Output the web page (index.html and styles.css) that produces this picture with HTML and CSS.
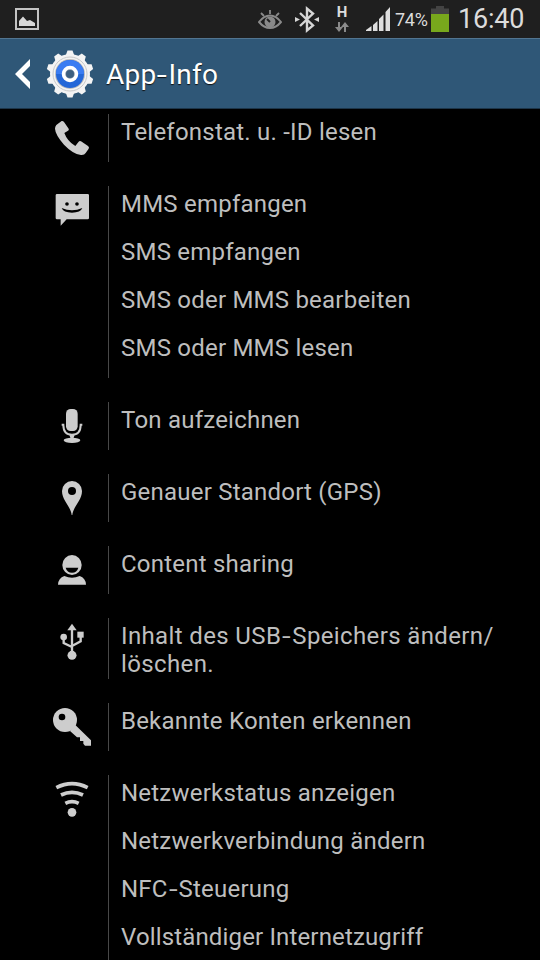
FILE: index.html
```
<!DOCTYPE html>
<html lang="de">
    <head>
        <meta charset="UTF-8">
        <meta name="viewport" content="width=device-width, initial-scale=1.0">

        <title>App-Info</title>
        <link rel="stylesheet" href="styles.css">
    </head>
    <body>
        <div class="status-bar">
            <svg class="picture" width="24" height="22" viewBox="0 0 24 22">
                <rect x="1" y="1" width="22" height="20" fill="none" stroke="#c4c4c4" stroke-width="2"/>
                <path d="M4 18V13L8 8.500L12 13L15 12L20 15V18Z" fill="#d8d8d8"/>
            </svg>
            <svg class="eye" width="24" height="38" viewBox="0 0 24 38">
                <path d="M1 22Q6 15.500 12 15.500T23 22Q18 28 12 28T1 22Z" fill="none" stroke="#8a8a8a" stroke-width="2"/>
                <circle cx="12" cy="22" r="5.500" fill="#8a8a8a"/>
                <path d="M12 22L9 19" stroke="#222" stroke-width="2"/>
                <path d="M12 10V14M3 13L6 16M21 13L18 16" stroke="#8a8a8a" stroke-width="1.800"/>
            </svg>
            <svg class="bluetooth" width="24" height="38" viewBox="0 0 24 38">
                <path d="M5 13L18 25.500L12 30.500V8.500L18 13.500L5 26" fill="none" stroke="#d6d6d6" stroke-width="2.400"/>
                <path d="M0 17L5 19.500L0 22ZM24 17L19 19.500L24 22Z" fill="#d6d6d6"/>
            </svg>
            <div class="network">
                <span>H</span>
                <svg width="14" height="10" viewBox="0 0 14 10">
                    <path d="M4 0V6M10 10V4" stroke="#8a8a8a" stroke-width="2"/>
                    <path d="M0 5H8L4 10ZM6 5H14L10 0Z" fill="#8a8a8a"/>
                </svg>
            </div>
            <svg class="signal" width="24" height="38" viewBox="0 0 24 38">
                <path d="M0 31V30L5.500 26V31ZM7 31V25L11.500 21V31ZM13 31V19L17.500 14.500V31ZM19.500 31V12L24 7V31Z" fill="#dedede"/>
            </svg>
            <span class="percent">74%</span>
            <div class="battery"></div>
            <span class="clock">16:40</span>
        </div>

        <header>
            <svg class="back" width="15" height="30" viewBox="0 0 15 30">
                <path d="M15 0V7L7 15L15 23V30L0 15Z" fill="#fff"/>
            </svg>
            <svg class="gear" width="48" height="48" viewBox="-24 -24 48 48">
                <g fill="#f4f4f4">
                    <circle r="20"/>
                    <path id="teeth" d="M-4.500 -18L-2.500 -23.500H2.500L4.500 -18ZM-4.500 18L-2.500 23.500H2.500L4.500 18Z"/>
                    <use href="#teeth" transform="rotate(36)"/>
                    <use href="#teeth" transform="rotate(72)"/>
                    <use href="#teeth" transform="rotate(108)"/>
                    <use href="#teeth" transform="rotate(144)"/>
                </g>
                <circle r="17" fill="none" stroke="#c9c9c9"/>
                <circle r="15" fill="#bdbdbd"/>
                <circle r="14" fill="#2467d8"/>
                <path d="M-14 0A14 14 0 0 1 14 0Z" fill="#3b7df2"/>
                <circle r="6.500" fill="#8a9aad" stroke="#fff" stroke-width="3.500"/>
                <circle r="4" fill="#3d5f80"/>
            </svg>
            <h1>App<span class="hyphen">-</span>Info</h1>
        </header>

        <main>
            <section>
                <svg class="icon" viewBox="0 0 120 144">
                    <path d="M29 21Q33 20 36 24L50 44Q52 48 48 50L37 57Q46 82 70 96L80 83Q83 80 87 82L108 96Q113 100 110 104L101 117Q97 124 87 123Q64 121 36 92Q10 62 9 44Q9 38 13 33Z"/>
                </svg>
                <ul>
                    <li>Telefonstat. u. -ID lesen</li>
                </ul>
            </section>
            <section>
                <svg class="icon" viewBox="0 0 120 144">
                    <path d="M15 24H107Q111 24 111 28V96Q111 100 107 100H44L26 119V100H15Q11 100 11 96V28Q11 24 15 24Z"/>
                    <g class="hole">
                        <circle cx="45" cy="54" r="5.500"/>
                        <circle cx="75" cy="54" r="5.500"/>
                        <path d="M29 66Q60 80 91 66Q86 80 60 80T29 66Z"/>
                    </g>
                </svg>
                <ul>
                    <li>MMS empfangen</li>
                    <li>SMS empfangen</li>
                    <li>SMS oder MMS bearbeiten</li>
                    <li>SMS oder MMS lesen</li>
                </ul>
            </section>
            <section>
                <svg class="icon" viewBox="0 0 120 144">
                    <rect x="42" y="21" width="35" height="66" rx="14"/>
                    <path class="line" d="M29 68H34C34 87 43 98 60 98S86 87 86 68H91"/>
                    <path d="M52 98H68L64 110H56Z"/>
                    <ellipse cx="60" cy="115" rx="25" ry="8"/>
                </svg>
                <ul>
                    <li>Ton aufzeichnen</li>
                </ul>
            </section>
            <section>
                <svg class="icon" viewBox="0 0 120 144">
                    <path d="M59 123C57 98 30 80 30 51A30 30 0 0 1 90 51C90 80 63 98 61 123Z"/>
                    <circle class="hole" cx="60" cy="51" r="12"/>
                </svg>
                <ul>
                    <li>Genauer Standort (GPS)</li>
                </ul>
            </section>
            <section>
                <svg class="icon" viewBox="0 0 120 144">
                    <ellipse cx="60" cy="57" rx="29" ry="30"/>
                    <path class="hole" d="M41 65H79Q75 80 60 80T41 65Z"/>
                    <path d="M18 116Q19 96 37 90Q60 101 83 90Q101 96 102 116Z"/>
                </svg>
                <ul>
                    <li>Content sharing</li>
                </ul>
            </section>
            <section>
                <svg class="icon" viewBox="0 0 120 144">
                    <path d="M60 17L74 37H46Z"/>
                    <path class="line usb" d="M60 34V110M35 57V75L60 87M86 56V70L60 84"/>
                    <circle cx="35" cy="57" r="10"/>
                    <rect x="76" y="41" width="19" height="18"/>
                    <circle cx="60" cy="112" r="13.500"/>
                </svg>
                <ul>
                    <li class="wide">Inhalt des USB<span class="hyphen">-</span>Speichers ändern/<br>löschen.</li>
                </ul>
            </section>
            <section>
                <svg class="icon" viewBox="0 0 120 144">
                    <circle cx="39" cy="51" r="36"/>
                    <path d="M70 66L117 112V128H99L94 122V114H84V103H75L54 84Z"/>
                    <circle class="hole" cx="30" cy="42" r="10"/>
                </svg>
                <ul>
                    <li>Bekannte Konten erkennen</li>
                </ul>
            </section>
            <section>
                <svg class="icon" viewBox="0 0 120 144">
                    <path class="line thick" d="M13 38Q60 14 107 38M27 60Q60 44 93 60M40 85Q60 75 80 85"/>
                    <circle cx="60" cy="112" r="13"/>
                </svg>
                <ul>
                    <li>Netzwerkstatus anzeigen</li>
                    <li>Netzwerkverbindung ändern</li>
                    <li>NFC<span class="hyphen">-</span>Steuerung</li>
                    <li class="tight">Vollständiger Internetzugriff</li>
                </ul>
            </section>
        </main>
    </body>
</html>
```
FILE: styles.css
```
body {
    font-family: Roboto, sans-serif;
    margin: 0;
    height: 960px;
    overflow: hidden;
    display: flex;
    flex-direction: column;
    background-color: #000;
    color: #bebebe;
}

svg {
    display: block;
    flex-shrink: 0;
}

.status-bar {
    flex: 0 0 38px;
    display: flex;
    align-items: center;
    padding: 0 15px;
    background-color: #1f1f1f;
    color: #dcdcdc;
}

.eye {
    margin-left: 219px;
}

.bluetooth {
    margin-left: 13px;
}

.network {
    width: 14px;
    margin-left: 16px;
    display: flex;
    flex-direction: column;
    align-items: center;
    gap: 4px;
}

.network span {
    font-size: 15px;
    font-weight: bold;
    line-height: 12px;
}

.signal {
    margin-left: 17px;
}

.percent {
    width: 36px;
    margin-left: 5px;
    padding-top: 2px;
    font-size: 18px;
    line-height: 36px;
    letter-spacing: -0.3px;
}

.battery {
    width: 18px;
    height: 26px;
    background: linear-gradient(#444 8px, #78a81c 8px);
    clip-path: polygon(28% 0, 72% 0, 72% 10%, 100% 10%, 100% 100%, 0 100%, 0 10%, 28% 10%);
}

.clock {
    margin-left: 9px;
    font-size: 27px;
    line-height: 36px;
    letter-spacing: -0.2px;
}

header {
    flex: 0 0 71px;
    box-sizing: border-box;
    display: flex;
    align-items: center;
    padding-left: 15px;
    background-color: #2f5777;
    border-top: 1px solid #527590;
    border-bottom: 1px solid #1d3549;
}

.gear {
    margin-left: 16px;
}

h1 {
    margin: 2px 0 0 12px;
    font-size: 28px;
    font-weight: normal;
    letter-spacing: 0.25px;
    color: #fff;
    text-shadow: 0 1px 1px #111;
}

.hyphen {
    display: inline-block;
    margin: 0 2px;
    transform: scaleX(1.3);
}

main {
    display: flex;
    flex-direction: column;
    gap: 24px;
    padding: 5px 0 0 52px;
}

section {
    display: flex;
    flex-shrink: 0;
    gap: 16px;
}

.icon {
    width: 40px;
    height: 48px;
    fill: #cdcdcd;
}

.icon .hole {
    fill: #000;
}

.icon .line {
    fill: none;
    stroke: #cdcdcd;
    stroke-width: 6;
}

.icon .usb {
    stroke-width: 7;
}

.icon .thick {
    stroke-width: 11;
}

ul {
    list-style-type: none;
    margin: 0;
    padding: 0 0 0 12px;
    border-left: 1px solid #484848;
}

li {
    box-sizing: border-box;
    min-height: 48px;
    padding: 4px 0 1px;
    font-size: 24px;
    line-height: 28px;
    letter-spacing: 0.22px;
    white-space: nowrap;
}

.wide {
    letter-spacing: 0.37px;
}

.tight {
    letter-spacing: 0.15px;
}
```
